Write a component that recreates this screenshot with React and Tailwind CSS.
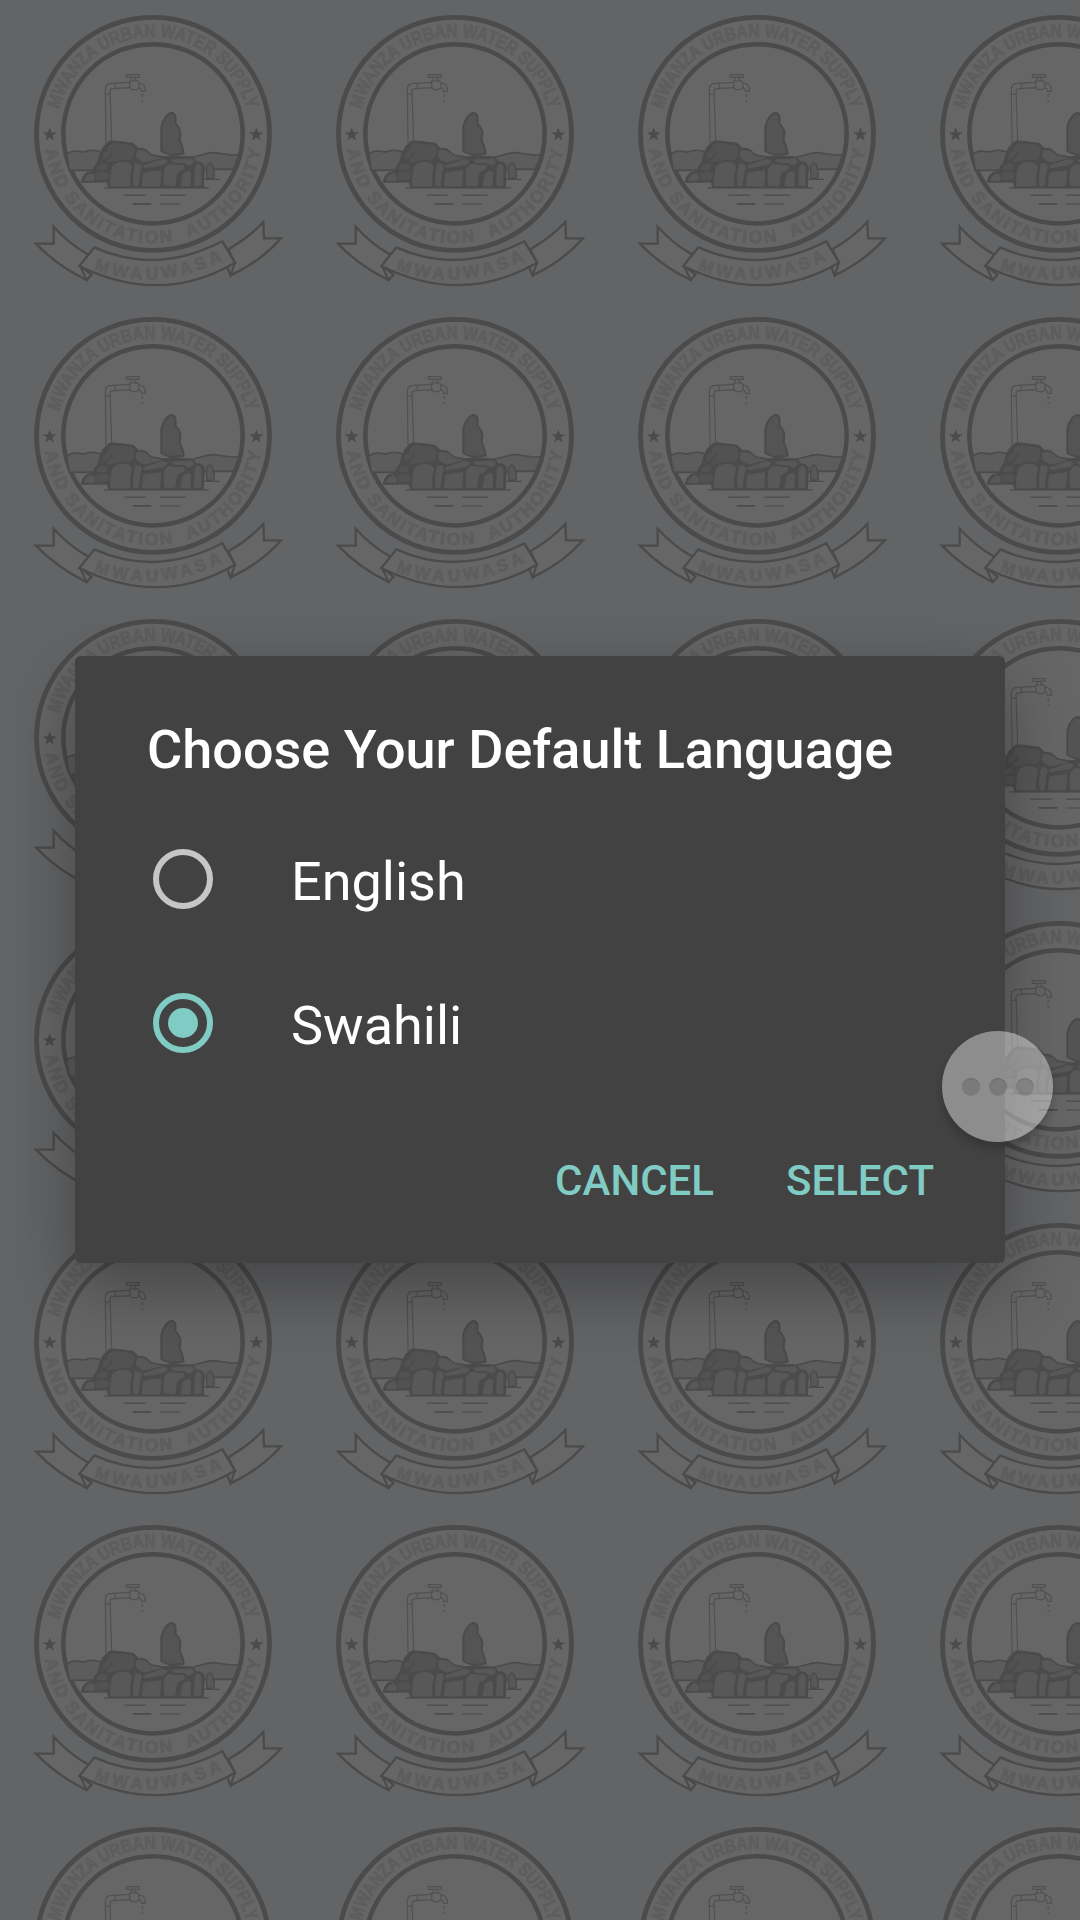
import React from "react";

const INK = "#4b4b4b";
const PAPER = "#666666";
const STONE = "#585858";
const LETTER = "#5d5d5d";

const star = (cx, cy, r) =>
  Array.from({ length: 10 }, (_, i) => {
    const a = (Math.PI / 5) * i - Math.PI / 2;
    const d = i % 2 ? r * 0.4 : r;
    return `${(cx + d * Math.cos(a)).toFixed(1)},${(cy + d * Math.sin(a)).toFixed(1)}`;
  }).join(" ");

function SealPaths() {
  return (
    <svg className="absolute h-0 w-0" aria-hidden="true">
      <defs>
        <path id="arc-top" d="M118.2 328.4 A290 290 0 0 1 679.8 328.4" />
        <path id="arc-bottom" d="M75.5 448 A327 327 0 0 0 723.5 445" />
        <path id="arc-ribbon" d="M221 808 Q400 881 611 780" />
      </defs>
    </svg>
  );
}

function Scenery() {
  return (
    <g strokeLinejoin="round" strokeLinecap="round">
      {/* water tap */}
      <g fill="none" stroke="#515151" strokeWidth="3.500">
        <path d="M258 430 L256 266 C257 254 265 250 276 250 L330 247" />
        <path d="M275 422 L270 272 C271 267 274 266 280 266 L331 263" />
        <path d="M256 283 L271 282 M285 250 L287 266" />
        <path d="M319 224 H358 V232 H319 Z M334 232 V240 L329 246 V263 L336 269 H350 L357 263 V248 L351 242 L345 240 V232 M328 243 H352" />
        <path d="M357 249 C370 249 377 258 376 274 H364 C364 266 362 264 356 264" />
      </g>
      <path d="M367 284 V289 M367 302 V304" stroke="#575757" strokeWidth="6" />

      <g transform="translate(0 420)">
        {/* hills */}
        <g fill="#5c5c5c" stroke={INK} strokeWidth="5">
          <path d="M140 42 C160 28 175 34 192 36 C210 28 228 30 244 36 L226 91 H148 Z" />
          <path d="M488 52 C530 58 550 36 585 38 C610 42 640 48 657 44 L640 88 H590 L545 90 Z" />
        </g>
        {/* rock mass */}
        <path
          d="M184 126 C186 114 190 104 200 98 L220 94 C220 84 226 72 238 66 L240 44 C244 32 248 18 258 14 C264 4 270 2 280 3 L310 6 L340 10 C346 14 350 22 356 25 C366 24 376 26 382 32 C390 40 396 46 406 46 L430 50 H500 L521 54 L528 66 C540 64 552 70 553 82 L550 143 H266 L262 127 Z"
          fill={INK}
          stroke={INK}
          strokeWidth="3"
        />
        <g fill={STONE} stroke={STONE} strokeWidth="3">
          <g fill="#525252" stroke="#525252">
            <path d="M278 11 C300 12 320 14 337 18 L343 30 L338 52 L328 60 C310 54 290 64 262 66 L268 54 C284 42 282 30 262 32 C264 22 268 12 278 11 Z" />
            <path d="M252 40 C258 34 266 30 272 36 L264 50 L248 58 Z" />
            <path d="M234 78 Q246 68 260 74 V86 Q246 94 232 88 Z" />
            <path d="M228 100 L260 97 L266 104 L261 118 L232 120 Z" />
          </g>
          <path d="M194 120 Q200 104 214 101 Q226 104 222 120 Z" />
          <path d="M278 80 C288 66 310 64 324 70 Q336 74 334 86 Q326 104 330 138 H272 Q270 104 278 80 Z" />
          <path d="M352 32 C368 30 382 34 392 48 L422 54 L398 60 L374 66 Q356 60 350 52 Z" />
          <path d="M346 72 L360 72 Q368 82 360 94 L354 138 H342 Q338 104 346 72 Z" />
          <path d="M370 78 L428 58 L442 63 L434 73 L376 83 Z" />
          <path d="M376 98 L422 92 L419 138 H368 L370 102 Z" />
          <path d="M434 88 Q440 72 450 74 L492 77 Q494 86 488 90 Q468 94 468 108 L464 138 L434 136 Q430 110 434 88 Z" />
          <path d="M456 60 L516 57 L520 68 L508 76 L492 68 L462 67 Z" />
          <path d="M490 102 Q504 90 512 98 L510 138 H484 Z" />
          <path d="M526 80 Q535 66 543 80 V136 H525 Z" />
        </g>
        <path d="M560 80 Q571 56 579 82 Q585 98 582 114 L560 116 Z" fill={STONE} stroke={INK} strokeWidth="4" />
        {/* standing boulder */}
        <path
          d="M424 33 L424 -40 C428 -60 444 -82 456 -81 C469 -78 467 -64 466 -50 C476 -40 485 -26 480 -10 C475 4 485 10 488 25 L491 41 L455 45 Q438 42 424 33 Z"
          fill="#545454"
          stroke={INK}
          strokeWidth="6"
        />
        <path d="M448 50 H480" stroke={INK} strokeWidth="7" />
        {/* water lines */}
        <g stroke={INK} strokeWidth="3.5">
          <path d="M252 143.5 H565 M548 118 H598 M150 91 H212 M588 88 H640" />
          <path d="M315 165.500 H376 M422 165.500 H496 M422 192 H480" />
          <path d="M340 191.500 H392" strokeWidth="5" />
        </g>
      </g>
    </g>
  );
}

function Seal() {
  return (
    <svg width="302" height="302" viewBox="0 0 302 302" className="block shrink-0" aria-hidden="true">
      <g transform="translate(20 0) scale(0.33333)">
        <circle cx="399" cy="401.500" r="349.500" fill={PAPER} stroke={INK} strokeWidth="14.500" />
        <circle cx="399" cy="401.500" r="269" fill={PAPER} stroke={INK} strokeWidth="13.500" />
        <Scenery />
        <polygon points={star(89, 404, 22)} fill={INK} />
        <polygon points={star(709, 404, 22)} fill={INK} />
        {/* ribbon */}
        <g transform="translate(0 420)" fill={PAPER} stroke={INK} strokeWidth="7">
          <path d="M101 260 Q148 312 208 346 L180 378 L214 404 L200 420 Q112 378 48 311 H101 Z" />
          <path d="M730 246 Q690 290 625 328 L644 368 L620 375 L632 406 Q725 362 783 295 H732 Z" />
          <path d="M180 378 L200 420 L214 404 Z M644 370 L620 376 L632 406 Z" strokeWidth="6" />
          <path d="M223 322 Q410 406 607 304 L645 368 Q422 498 178 378 Z" />
        </g>
        <g
          fill={LETTER}
          stroke={LETTER}
          strokeWidth="2"
          className="font-['Liberation_Sans',sans-serif] font-bold"
        >
          <text fontSize="57">
            <textPath href="#arc-top" textLength="764" lengthAdjust="spacingAndGlyphs">
              MWANZA URBAN WATER SUPPLY
            </textPath>
          </text>
          <text fontSize="53">
            <textPath href="#arc-bottom" textLength="934" lengthAdjust="spacing">
              {"AND SANITATION\u00a0 AUTHORITY"}
            </textPath>
          </text>
          <text fontSize="52">
            <textPath href="#arc-ribbon" textLength="400" lengthAdjust="spacing">
              MWAUWASA
            </textPath>
          </text>
        </g>
      </g>
    </svg>
  );
}

function Wallpaper() {
  return (
    <div className="grid h-[1920px] w-[1080px] auto-rows-[302px] grid-cols-[repeat(4,302px)] overflow-hidden">
      {Array.from({ length: 28 }, (_, i) => (
        <Seal key={i} />
      ))}
    </div>
  );
}

function Option({ label, checked }) {
  return (
    <label className="flex h-36 items-center gap-[78px] pl-[78px]">
      <span
        role="radio"
        aria-checked={checked}
        className={
          checked
            ? "flex size-[60px] items-center justify-center rounded-full border-6 border-[#80cbc4]"
            : "size-[60px] rounded-full border-6 border-[#c6c6c6]"
        }
      >
        {checked && <span className="size-[30px] rounded-full bg-[#80cbc4]" />}
      </span>
      <span className="pt-1.5 text-[54px] leading-[64px] text-white">{label}</span>
    </label>
  );
}

function LanguageDialog() {
  return (
    <section
      role="dialog"
      className="flex h-[607px] w-[930px] flex-col rounded-[6px] bg-[#424242] shadow-[0_26px_70px_rgba(0,0,0,0.32)]"
    >
      <h1 className="pt-[62px] pl-[72px] text-[54px] leading-[64px] font-medium whitespace-nowrap text-white">
        Choose Your Default Language
      </h1>
      <div className="mt-[25px] flex flex-col">
        <Option label="English" checked={false} />
        <Option label="Swahili" checked />
      </div>
      <div className="mt-[61px] flex justify-end gap-[72px] pr-[71px] text-[42px] leading-[50px] font-medium text-[#80cbc4]">
        <button>CANCEL</button>
        <button>SELECT</button>
      </div>
    </section>
  );
}

function FloatingMenu() {
  return (
    <div className="absolute top-[1031px] left-[942px] flex size-[111px] items-center justify-center gap-[9px] rounded-full bg-white/40 shadow-[0_7px_8px_rgba(0,0,0,0.18)]">
      <span className="size-[18px] rounded-full bg-black/13 shadow-[inset_0_1px_1px_rgba(0,0,0,0.15)]" />
      <span className="size-[18px] rounded-full bg-black/13 shadow-[inset_0_1px_1px_rgba(0,0,0,0.15)]" />
      <span className="size-[18px] rounded-full bg-black/13 shadow-[inset_0_1px_1px_rgba(0,0,0,0.15)]" />
    </div>
  );
}

export default function App() {
  return (
    <main className="relative h-[1920px] w-[1080px] overflow-hidden bg-[#636466] font-['Roboto',sans-serif]">
      <SealPaths />
      <Wallpaper />
      <div className="absolute inset-0 flex flex-col items-center pt-[656px]">
        <LanguageDialog />
      </div>
      <FloatingMenu />
    </main>
  );
}
